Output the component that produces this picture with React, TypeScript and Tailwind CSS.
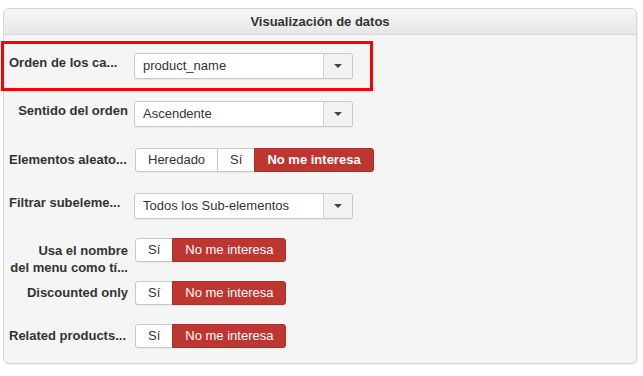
import React from "react";

function Select({ value }: { value: string }) {
  return (
    <div className="flex h-[26px] w-[219px] rounded-[3px] border border-[#c8c8c8] bg-white shadow-[0_1px_1px_rgba(0,0,0,0.06)]">
      <div className="flex flex-1 items-center pl-[8px] text-[13px] text-[#333]">{value}</div>
      <div className="flex w-[29px] items-center justify-center rounded-r-[3px] border-l border-[#d0d0d0] bg-[#f2f2f2]">
        <div className="h-0 w-0 border-x-[4px] border-t-[4px] border-x-transparent border-t-[#444]" />
      </div>
    </div>
  );
}

function BtnGroup({ items, boldActive }: { items: string[]; boldActive?: boolean }) {
  return (
    <div className="flex pl-px">
      {items.map((it, i) => {
        const active = i === items.length - 1;
        const first = i === 0;
        return (
          <div
            key={it}
            className={[
              "flex h-[24px] items-center border px-3 text-[13px] leading-[18px] shadow-[0_1px_1px_rgba(0,0,0,0.05)]",
              first ? "rounded-l-[3px]" : "-ml-px",
              active ? "rounded-r-[3px] border-[#a8302b] bg-[#bd362f] text-white" : "border-[#c8c8c8] bg-white text-[#333]",
              active && boldActive ? "font-bold" : "",
            ].join(" ")}
          >
            {it}
          </div>
        );
      })}
    </div>
  );
}

function Label({
  children,
  btn,
  two,
  left,
}: {
  children: React.ReactNode;
  btn?: boolean;
  two?: boolean;
  left?: boolean;
}) {
  return (
    <div
      className={[
        "w-[119px] shrink-0 text-[13px] font-bold text-[#333] whitespace-nowrap",
        left ? "text-left" : "text-right",
        two ? "pt-[4px] leading-[17px]" : btn ? "pt-[3px] leading-[18px]" : "pt-[1px] leading-[18px]",
      ].join(" ")}
    >
      {children}
    </div>
  );
}

export default function App() {
  return (
    <div
      className="h-[376px] w-[643px] bg-white pl-[3px] pt-[8px]"
      style={{ fontFamily: '"Liberation Sans", Arial, sans-serif' }}
    >
      <div className="relative h-[356px] w-[634px] rounded-[6px] border border-[#d6d6d6] bg-[#f5f5f5] shadow-[1px_1px_1px_rgba(0,0,0,0.06)]">
        <div className="flex h-[26px] items-center justify-center rounded-t-[6px] border-b border-[#dadada] bg-gradient-to-b from-[#f8f8f8] to-[#e6e6e6] text-[13px] font-bold text-[#333]">
          Visualización de datos
        </div>
        <div className="flex flex-col pl-[5px] pt-[18px]">
          <div className="flex items-start gap-[6px]">
            <Label left>Orden de los ca...</Label>
            <Select value="product_name" />
          </div>
          <div className="mt-[22px] flex items-start gap-[6px]">
            <Label>Sentido del orden</Label>
            <Select value="Ascendente" />
          </div>
          <div className="mt-[21px] flex items-start gap-[6px]">
            <Label btn left>Elementos aleato...</Label>
            <BtnGroup items={["Heredado", "Sí", "No me interesa"]} boldActive />
          </div>
          <div className="mt-[21px] flex items-start gap-[6px]">
            <Label left>Filtrar subeleme...</Label>
            <Select value="Todos los Sub-elementos" />
          </div>
          <div className="mt-[19px] flex items-start gap-[6px]">
            <Label two>
              Usa el nombre
              <br />
              del menu como tí...
            </Label>
            <BtnGroup items={["Sí", "No me interesa"]} />
          </div>
          <div className="mt-[5px] flex items-start gap-[6px]">
            <Label btn>Discounted only</Label>
            <BtnGroup items={["Sí", "No me interesa"]} />
          </div>
          <div className="mt-[19px] flex items-start gap-[6px]">
            <Label btn left>Related products...</Label>
            <BtnGroup items={["Sí", "No me interesa"]} />
          </div>
        </div>
        <div className="pointer-events-none absolute left-[-3px] top-[32px] h-[50px] w-[372px] border-[3px] border-[#ff0000]" />
      </div>
    </div>
  );
}
